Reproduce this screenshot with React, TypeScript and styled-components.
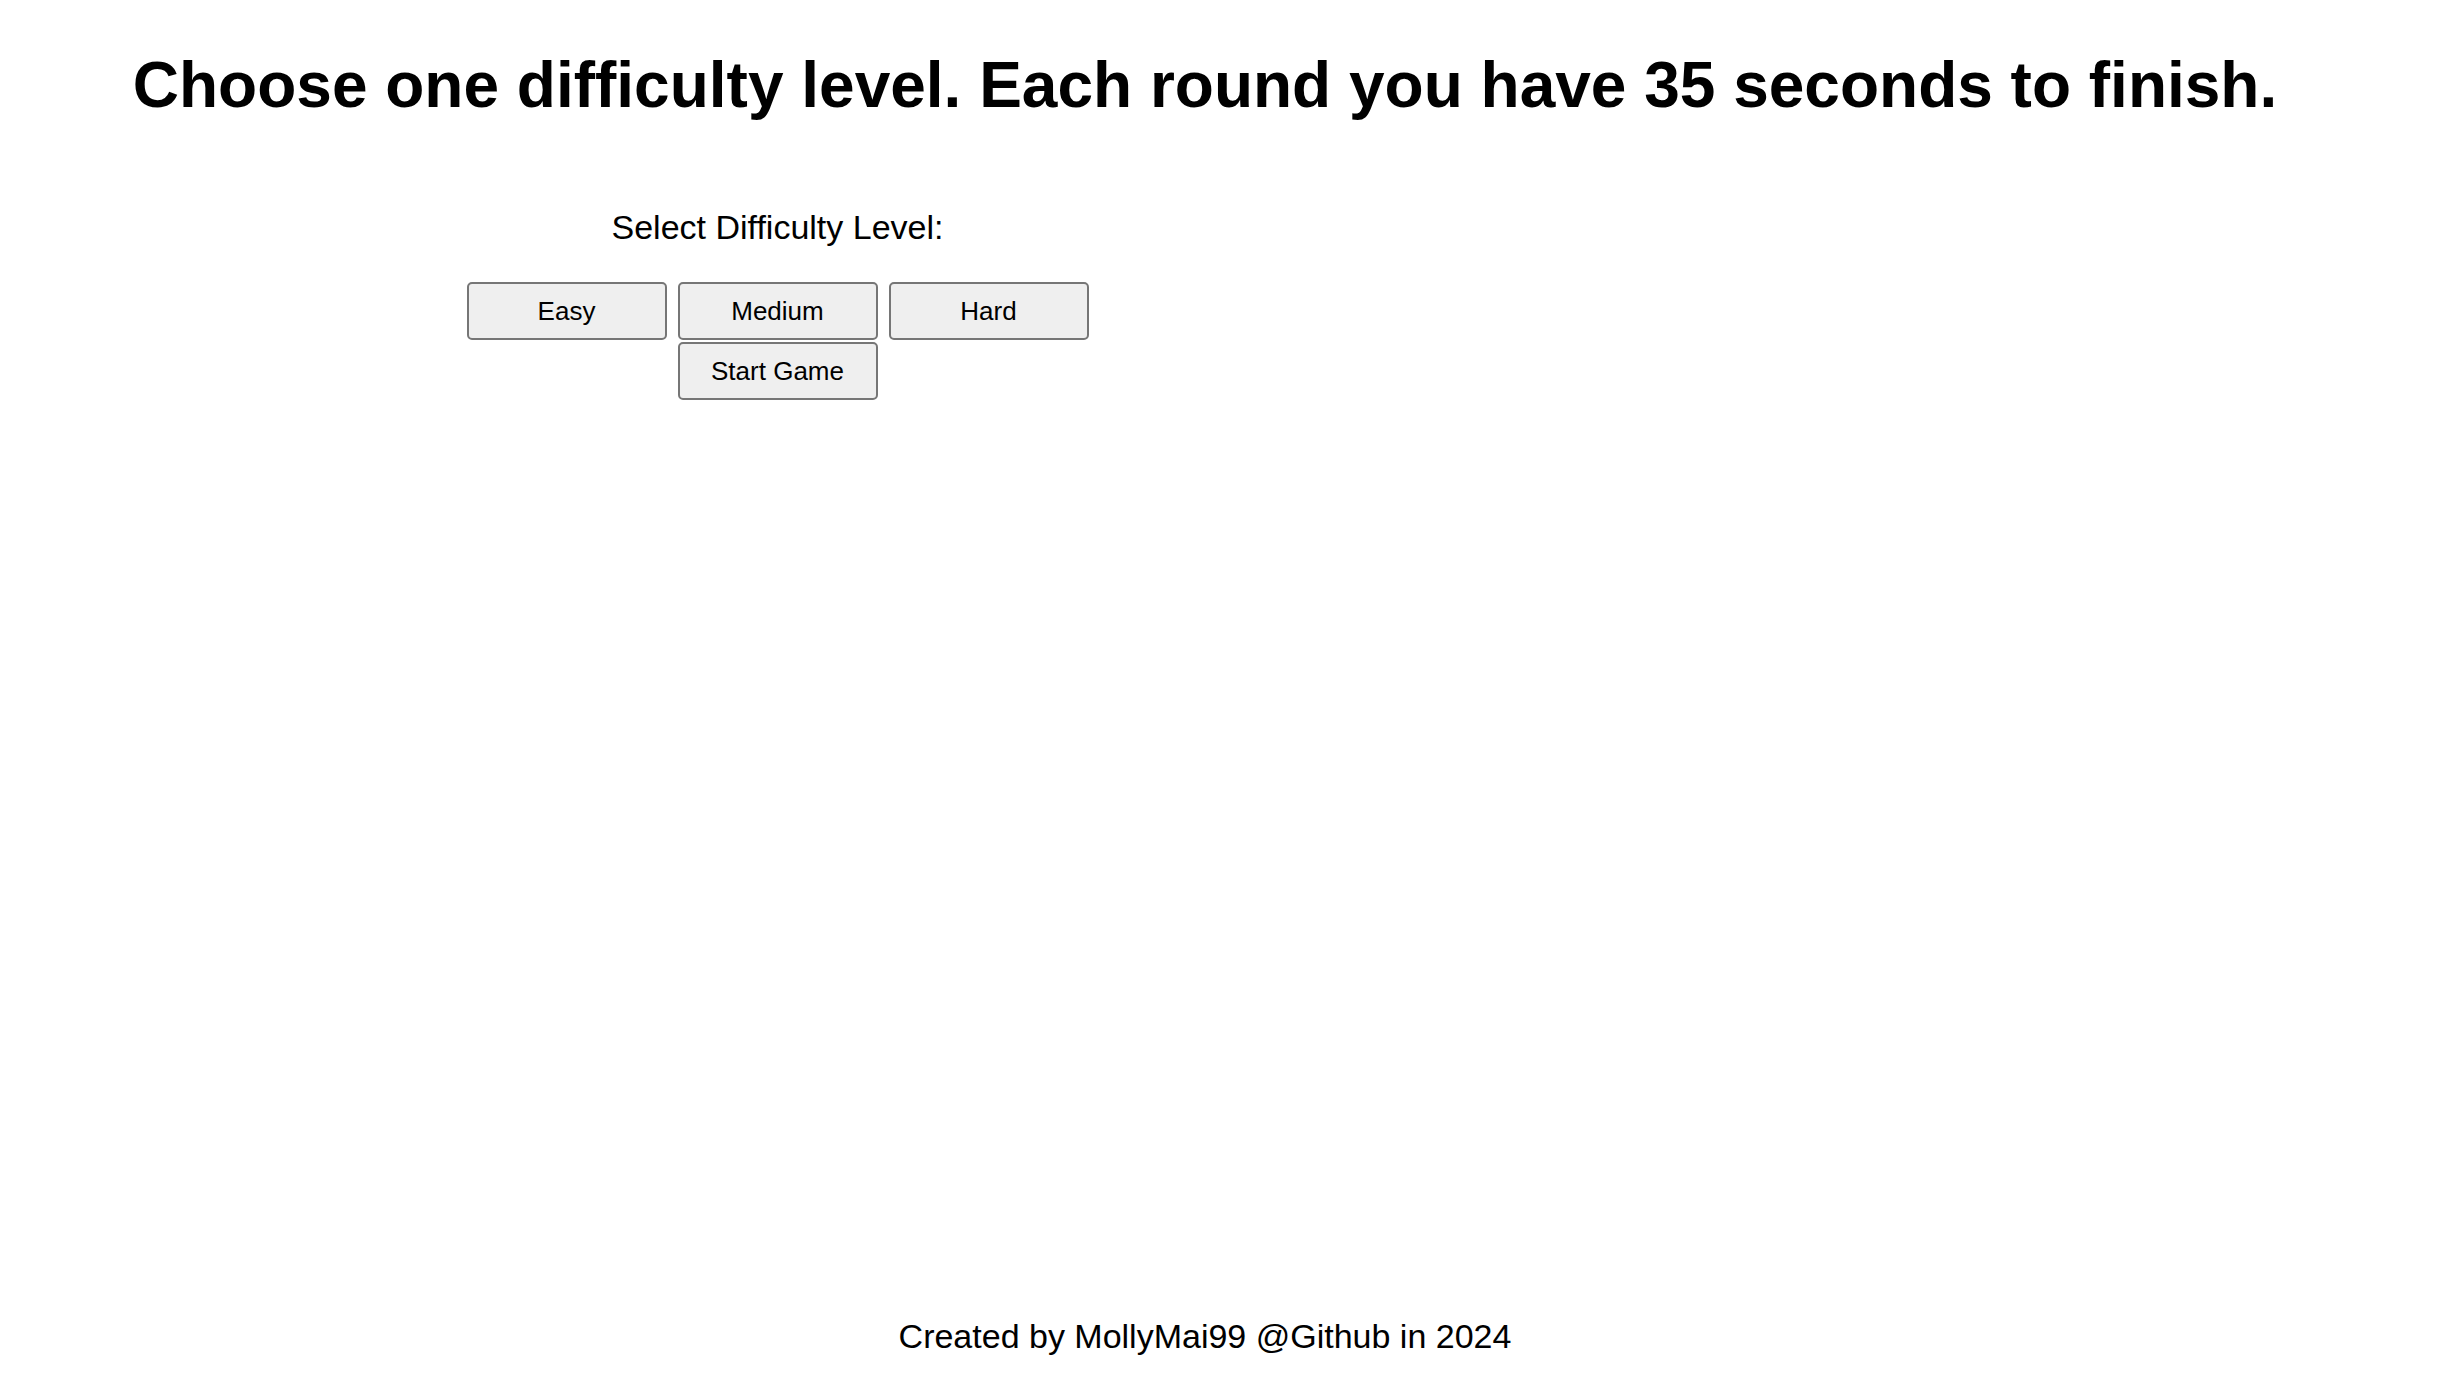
import React from "react";
import styled, { createGlobalStyle } from "styled-components";

const GlobalStyle = createGlobalStyle`
  html, body {
    margin: 0;
    padding: 0;
    background: #ffffff;
  }
  body {
    font-family: "Liberation Sans", Arial, sans-serif;
    color: #000000;
  }
`;

const Page = styled.div`
  min-height: 100vh;
  box-sizing: border-box;
  display: flex;
  flex-direction: column;
  padding-right: 52px;
`;

const Title = styled.h1`
  margin: 48px 0 0;
  font-family: "Liberation Sans", Arial, sans-serif;
  font-weight: 700;
  font-size: 64px;
  line-height: 74px;
  letter-spacing: 0;
  text-align: center;
`;

const Main = styled.main`
  display: flex;
  flex-direction: row;
`;

const ControlsPanel = styled.section`
  width: 1555px;
  flex: 0 0 1555px;
  display: flex;
  flex-direction: column;
  align-items: center;
  padding-top: 86px;
`;

const BoardArea = styled.section`
  flex: 1;
`;

const Label = styled.p`
  margin: 0;
  font-size: 34px;
  line-height: 39px;
`;

const ButtonGroup = styled.div`
  margin-top: 35px;
  width: 622px;
  display: flex;
  flex-wrap: wrap;
  justify-content: center;
  column-gap: 11px;
  row-gap: 2px;
`;

const LevelButton = styled.button<{ $active?: boolean }>`
  width: 200px;
  height: 58px;
  box-sizing: border-box;
  border: 2px solid #767676;
  border-radius: 5px;
  background: ${(p) => (p.$active ? "#e3e3e3" : "#efefef")};
  color: #000000;
  font-family: "Liberation Sans", Arial, sans-serif;
  font-size: 26px;
  padding: 0;
  cursor: pointer;
`;

const Footer = styled.footer`
  margin-top: auto;
  padding-bottom: 22px;
  text-align: center;
  font-size: 34px;
  line-height: 39px;
`;

const levels = ["Easy", "Medium", "Hard"];

export default function App() {
  return (
    <>
      <GlobalStyle />
      <Page>
        <Title>
          Choose one difficulty level. Each round you have 35 seconds to finish.
        </Title>
        <Main>
          <ControlsPanel>
            <Label>Select Difficulty Level:</Label>
            <ButtonGroup>
              {levels.map((l) => (
                <LevelButton key={l}>{l}</LevelButton>
              ))}
              <LevelButton>Start Game</LevelButton>
            </ButtonGroup>
          </ControlsPanel>
          <BoardArea />
        </Main>
        <Footer>Created by MollyMai99 @Github in 2024</Footer>
      </Page>
    </>
  );
}
